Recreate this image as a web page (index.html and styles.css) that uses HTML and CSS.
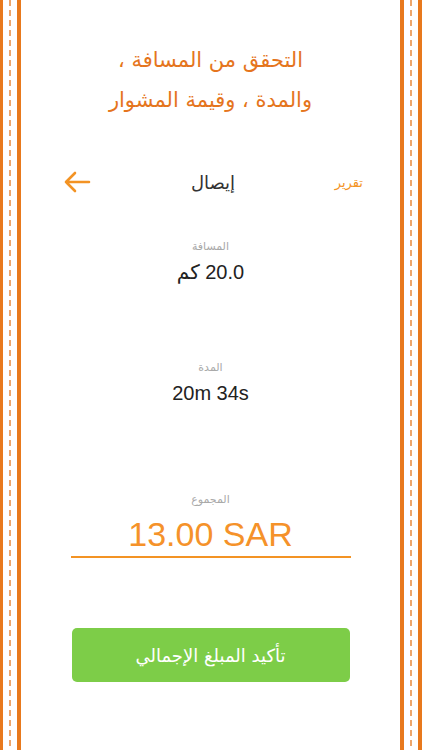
FILE: index.html
```html
<!DOCTYPE html>
<html lang="ar">
<head>
<meta charset="utf-8">
<title>إيصال</title>
<link rel="stylesheet" href="styles.css">
</head>
<body>
<div class="screen">
  <div class="rail rail-left"></div>
  <main class="content">
    <h1 class="title" dir="rtl">التحقق من المسافة ،<br>والمدة ، وقيمة المشوار</h1>
    <nav class="nav">
      <span class="back">
        <svg width="28" height="22" viewBox="0 0 28 22" aria-hidden="true">
          <path d="M26 11 H3 M12 2 L3 11 L12 20" fill="none" stroke="#f39324" stroke-width="2.6" stroke-linecap="round" stroke-linejoin="round"/>
        </svg>
      </span>
      <span class="nav-title">إيصال</span>
      <span class="report">تقرير</span>
    </nav>
    <section class="stat stat-distance">
      <div class="label">المسافة</div>
      <div class="value" dir="rtl">20.0 كم</div>
    </section>
    <section class="stat stat-duration">
      <div class="label">المدة</div>
      <div class="value">20m 34s</div>
    </section>
    <section class="stat stat-total">
      <div class="label">المجموع</div>
      <div class="amount">13.00 SAR</div>
    </section>
    <button class="confirm" type="button">تأكيد المبلغ الإجمالي</button>
  </main>
  <div class="rail rail-right"></div>
</div>
</body>
</html>
```
FILE: styles.css
```css
html, body {
  margin: 0;
  padding: 0;
  background: #ffffff;
}

body {
  font-family: "Liberation Sans", "DejaVu Sans", sans-serif;
}

.screen {
  display: flex;
  width: 422px;
  height: 750px;
  overflow: hidden;
}

.rail {
  flex: none;
  height: 100%;
}

.rail-left {
  width: 21px;
  background:
    linear-gradient(#e8791d, #e8791d) 0 0 / 3px 100% no-repeat,
    linear-gradient(#e8791d, #e8791d) 17px 0 / 4px 100% no-repeat,
    repeating-linear-gradient(to bottom, #eda66c 0 6px, transparent 6px 10px) 9px 0 / 2px 100% no-repeat;
}

.rail-right {
  width: 22px;
  background:
    linear-gradient(#e8791d, #e8791d) 0 0 / 4px 100% no-repeat,
    linear-gradient(#e8791d, #e8791d) 18px 0 / 4px 100% no-repeat,
    repeating-linear-gradient(to bottom, #eda66c 0 6px, transparent 6px 10px) 10px 0 / 2px 100% no-repeat;
}

.content {
  flex: 1;
  display: flex;
  flex-direction: column;
  align-items: center;
}

.title {
  margin: 0;
  padding-top: 40px;
  font-family: "DejaVu Sans", sans-serif;
  font-weight: normal;
  font-size: 21px;
  line-height: 40px;
  color: #e5751d;
  text-align: center;
}

.nav {
  align-self: stretch;
  margin-top: 47px;
  height: 30px;
  padding: 0 37px 0 42px;
  display: grid;
  grid-template-columns: 1fr auto 1fr;
  align-items: center;
}

.back {
  justify-self: start;
  display: flex;
}

.nav-title {
  font-family: "DejaVu Sans", sans-serif;
  font-size: 18px;
  color: #333333;
}

.report {
  justify-self: end;
  font-family: "DejaVu Sans", sans-serif;
  font-size: 13px;
  color: #f39324;
}

.stat {
  display: flex;
  flex-direction: column;
  align-items: center;
}

.label {
  font-family: "DejaVu Sans", sans-serif;
  font-size: 11px;
  line-height: 16px;
  color: #a9a9a9;
}

.value {
  margin-top: 5px;
  font-size: 20px;
  line-height: 24px;
  color: #222222;
}

.stat-distance {
  margin-top: 42px;
}

.stat-duration {
  margin-top: 76px;
}

.stat-total {
  margin-top: 87px;
}

.amount {
  margin-top: 6px;
  width: 280px;
  padding-bottom: 2px;
  border-bottom: 2px solid #f39324;
  font-size: 34px;
  line-height: 40px;
  color: #f5922a;
  text-align: center;
}

.confirm {
  margin-top: 70px;
  width: 278px;
  height: 54px;
  border: none;
  border-radius: 5px;
  background: #7dcd48;
  color: #ffffff;
  font-family: "DejaVu Sans", sans-serif;
  font-size: 18px;
  padding: 0;
}
```
